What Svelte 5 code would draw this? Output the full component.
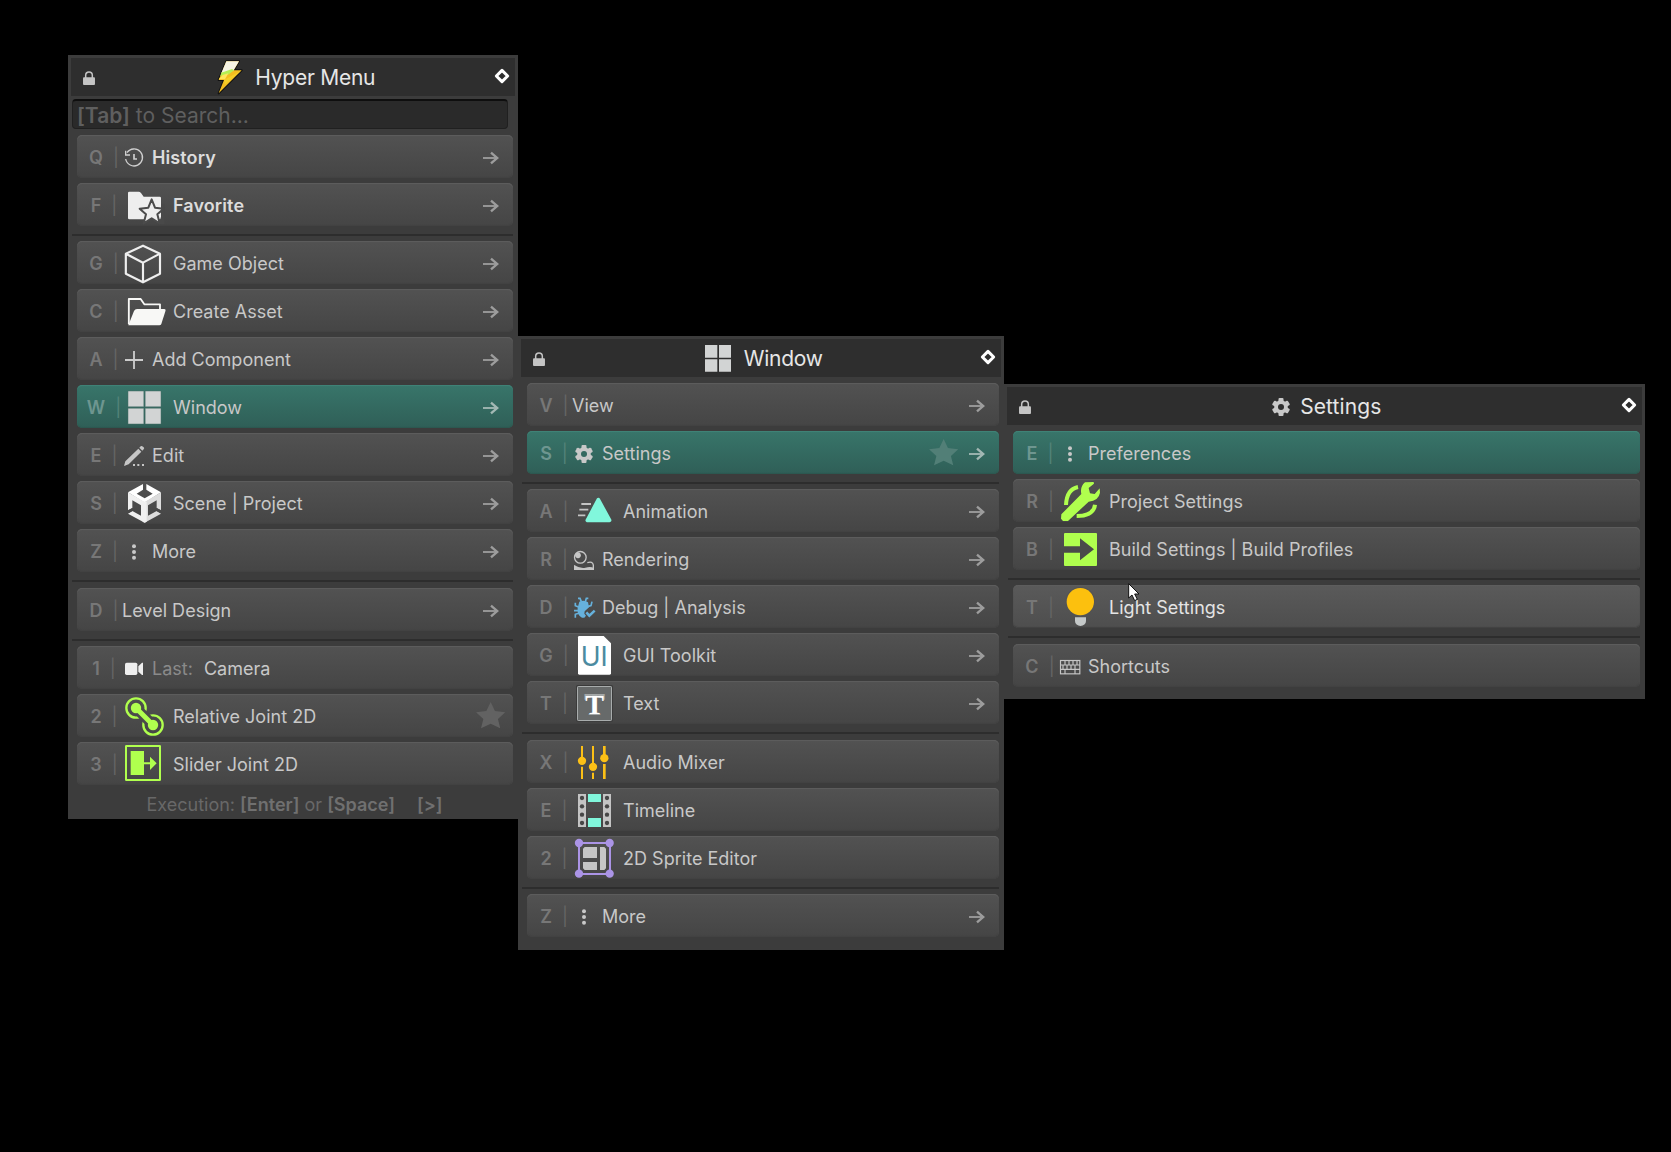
<script>
  const panels = [
    {
      id: 'hyper', title: 'Hyper Menu', icon: 'bolt', iconWidth: 26, search: true, footer: true,
      groups: [
        [
          { key: 'Q', icon: 'history', label: 'History', bold: true, arrow: true },
          { key: 'F', icon: 'favorite', big: true, label: 'Favorite', bold: true, arrow: true }
        ],
        [
          { key: 'G', icon: 'cube', big: true, label: 'Game Object', arrow: true },
          { key: 'C', icon: 'folder', big: true, label: 'Create Asset', arrow: true },
          { key: 'A', icon: 'plus', label: 'Add Component', arrow: true },
          { key: 'W', icon: 'windows', big: true, label: 'Window', arrow: true, active: true },
          { key: 'E', icon: 'pencil', label: 'Edit', arrow: true },
          { key: 'S', icon: 'unity', big: true, label: 'Scene | Project', arrow: true },
          { key: 'Z', icon: 'dots', label: 'More', arrow: true }
        ],
        [{ key: 'D', label: 'Level Design', arrow: true }],
        [
          { key: '1', icon: 'camera', prefix: 'Last:', label: 'Camera' },
          { key: '2', icon: 'joint', big: true, label: 'Relative Joint 2D', star: true },
          { key: '3', icon: 'slider', big: true, label: 'Slider Joint 2D' }
        ]
      ],
      gaps: ['', 'wide', '']
    },
    {
      id: 'window', title: 'Window', icon: 'titleWindows', iconWidth: 26,
      groups: [
        [
          { key: 'V', label: 'View', arrow: true },
          { key: 'S', icon: 'gear', label: 'Settings', arrow: true, active: true, star: true }
        ],
        [
          { key: 'A', icon: 'animation', big: true, label: 'Animation', arrow: true },
          { key: 'R', icon: 'rendering', label: 'Rendering', arrow: true },
          { key: 'D', icon: 'bug', label: 'Debug | Analysis', arrow: true },
          { key: 'G', icon: 'ui', big: true, label: 'GUI Toolkit', arrow: true },
          { key: 'T', icon: 'text', big: true, label: 'Text', arrow: true }
        ],
        [
          { key: 'X', icon: 'mixer', big: true, label: 'Audio Mixer' },
          { key: 'E', icon: 'timeline', big: true, label: 'Timeline' },
          { key: '2', icon: 'sprite', big: true, label: '2D Sprite Editor' }
        ],
        [{ key: 'Z', icon: 'dots', label: 'More', arrow: true }]
      ],
      gaps: ['', 'wide', '']
    },
    {
      id: 'settings', title: 'Settings', icon: 'titleGear', iconWidth: 18,
      groups: [
        [
          { key: 'E', icon: 'dots', label: 'Preferences', active: true },
          { key: 'R', icon: 'wrench', big: true, label: 'Project Settings' },
          { key: 'B', icon: 'build', big: true, label: 'Build Settings | Build Profiles' }
        ],
        [{ key: 'T', icon: 'bulb', big: true, label: 'Light Settings', hover: true }],
        [{ key: 'C', icon: 'keyboard', label: 'Shortcuts' }]
      ],
      gaps: ['', 'wide']
    }
  ];
</script>

{#snippet gearShape(cx, cy)}
  <g transform="translate({cx} {cy})">
    {#each [0, 60, 120] as a}
      <rect x="-7.5" y="-27" width="15" height="54" rx="3" transform="rotate({a})" fill="#c8c8c8" />
    {/each}
    <circle r="14.5" fill="none" stroke="#c8c8c8" stroke-width="12" />
    <circle r="9" class="hole" />
  </g>
{/snippet}

{#snippet glyph(name)}
  {#if name === 'history'}
    <g fill="none" stroke="#d0d0d0" stroke-width="4">
      <path d="M5 72A25.500 25.500 0 1 0 9 53" /><path d="M5 47V60H18" /><path d="M30 57V72H39" stroke-width="5" />
    </g>
  {:else if name === 'favorite'}
    <path d="M12 30Q12 26 16 26H44Q48 26 51 30L59 41H107Q111 41 111 45V109H16Q12 109 12 105Z" fill="#eee" />
    <path d="M83 49L93 74L119 77L100 94L107 121L83 106L59 121L66 94L47 77L73 74Z" fill="#eee" stroke="#4b4b4b" stroke-width="6" stroke-linejoin="round" />
    <path d="M111.500 62H122V124H104L111.500 100Z" fill="#494949" />
  {:else if name === 'cube'}
    <path d="M57 14L108 38V98L57 124L5.500 98V38ZM5.500 38L57 65L108 38M57 65V124" fill="none" stroke="#eee" stroke-width="6.500" stroke-linejoin="round" />
  {:else if name === 'folder'}
    <path d="M14.500 106V30H50L61 46H108V62" fill="none" stroke="#f8f8f6" stroke-width="5.500" stroke-linejoin="round" />
    <path d="M39 60H121Q126 60 124.500 65L112 105Q110.500 109 106 109H13L30 66Q33 60 39 60Z" fill="#f8f8f6" />
  {:else if name === 'plus'}
    <path d="M3 69H57M30 42V96" stroke="#ccc" stroke-width="5.500" />
  {:else if name === 'windows'}
    <path d="M12 18H59.500V65.500H12ZM63.500 18H111V65.500H63.500ZM12 69.500H59.500V117H12ZM63.500 69.500H111V117H63.500Z" fill="#d2d4d4" stroke="#476c66" stroke-width="1.500" />
  {:else if name === 'pencil'}
    <path d="M0 99L4 85L43 47L52 56L14 94ZM46 44L50 40Q53 37 57 41L59 43Q62 46 59 49L55 53Z" fill="#c6c6c6" />
    <path d="M27 93H33V99H27ZM40 93H46V99H40ZM54 93H60V99H54Z" fill="#c6c6c6" />
  {:else if name === 'unity'}
    <path d="M57 9V26L38 38L62 52L86 38L67 26V9L111 34L62 65L12 34Z" fill="#fff" />
    <path d="M12 34L62 63V125L12 98L25 90L51 104V73L25 58V81L12 88Z" fill="#f0f0f0" />
    <path d="M111 34L62 63V125L111 98L98 90L72 104V73L98 58V81L111 88Z" fill="#dcdcdc" />
    <path d="M56 62H68V122L62 125L56 122Z" fill="#f0f0f0" />
    <path d="M12 88L25 81L33 86L14 96Z" fill="#494949" /><path d="M111 88L98 81L90 86L109 96Z" fill="#494949" />
  {:else if name === 'dots'}
    <g fill="#c8c8c8"><circle cx="30" cy="51.500" r="6" /><circle cx="30" cy="69" r="6" /><circle cx="30" cy="86.500" r="6" /></g>
  {:else if name === 'camera'}
    <rect x="3" y="50" width="37" height="37" rx="5" fill="#eee" /><path d="M43 61L54 50H57V87H54L43 77Z" fill="#eee" />
  {:else if name === 'joint'}
    <g fill="none" stroke="#b0ff4e" stroke-width="7"><circle cx="36" cy="42" r="29" /><circle cx="87" cy="93" r="29" /></g>
    <path d="M36 42L87 93" stroke="#4a4a4a" stroke-width="31" />
    <circle cx="36" cy="42" r="20" fill="#4c4c4c" /><circle cx="87" cy="93" r="20" fill="#494949" />
    <path d="M36 42L87 93" stroke="#b0ff4e" stroke-width="15" />
    <circle cx="36" cy="42" r="15.500" fill="#b0ff4e" /><circle cx="87" cy="93" r="15.500" fill="#b0ff4e" />
  {:else if name === 'slider'}
    <rect x="6" y="12" width="102" height="102" rx="1" fill="none" stroke="#b0ff4e" stroke-width="6" />
    <path d="M20 27H60V61H78V44L98 64L78 84V67H60V99H20Z" fill="#b0ff4e" />
  {:else if name === 'gear'}
    {@render gearShape(30, 69)}
  {:else if name === 'animation'}
    <path d="M22 45H51M16 62H43M12 79H34" stroke="#c4c4c4" stroke-width="5.500" />
    <path d="M73 32L40 94H107Z" fill="#81f7dc" stroke="#81f7dc" stroke-width="11" stroke-linejoin="round" />
  {:else if name === 'rendering'}
    <circle cx="19" cy="61" r="17.500" fill="none" stroke="#c6c6c6" stroke-width="4" /><circle cx="12" cy="55" r="8.500" fill="#c6c6c6" />
    <path d="M40 77Q56 72 58 84V96H2V86" fill="none" stroke="#c6c6c6" stroke-width="4" /><path d="M0 84Q18 95 34 92Q50 88 60 93V99H0Z" fill="#c6c6c6" />
  {:else if name === 'bug'}
    <g stroke="#66b1dc" stroke-width="5" fill="none">
      <path d="M12 40H18L22 50M43 40H37L34 50M14 66L4 62V53M40 65L51 62L54 50M13 77H0M16 84L4 88V98" />
    </g>
    <path d="M16 50Q30 43 42 52L45 67L32 79L31 86L36 92L31 98H24Q8 90 11 68Z" fill="#66b1dc" />
    <path d="M37 82L46 92L62 77" fill="none" stroke="#66b1dc" stroke-width="7.500" />
  {:else if name === 'ui'}
    <path d="M16 9H89L111 31V121Q111 125 107 125H16Q12 125 12 121V13Q12 9 16 9Z" fill="#fff" />
    <text x="20" y="100" class="ui-mark">UI</text>
  {:else if name === 'text'}
    <rect x="6" y="12" width="111" height="110" rx="5" fill="#3a3a3a" />
    <rect x="10.500" y="16.500" width="102" height="102" rx="2" fill="#676a6a" stroke="#a8acac" stroke-width="3" />
    <text x="62" y="102" text-anchor="middle" class="t-shadow">T</text>
    <text x="62" y="99" text-anchor="middle" class="t-mark">T</text>
  {:else if name === 'mixer'}
    <g fill="#fcc016">
      <path d="M21 18H27V60H21ZM21 80H27V117H21ZM54 18H60V76H54ZM54 98H60V117H54ZM87 18H95V50H87ZM87 72H95V117H87Z" />
      <circle cx="24" cy="62.500" r="12.500" /><circle cx="57" cy="80.500" r="12.500" /><circle cx="91" cy="54.500" r="12.500" />
    </g>
  {:else if name === 'timeline'}
    <path d="M12 18H36V117H12ZM87 18H111V117H87Z" fill="#c4c4c4" /><path d="M42 18H81V42H42ZM42 90H81V117H42Z" fill="#81f7dc" />
    {#each [30, 55, 80, 105] as y}
      <circle cx="24" cy={y} r="6.500" fill="#464646" /><circle cx="99" cy={y} r="6.500" fill="#464646" />
    {/each}
  {:else if name === 'sprite'}
    <rect x="15" y="21" width="93" height="93" fill="none" stroke="#ab94e6" stroke-width="6" />
    <g fill="#ab94e6"><circle cx="15" cy="21" r="12.500" /><circle cx="107" cy="21" r="12.500" /><circle cx="15" cy="113" r="12.500" /><circle cx="107" cy="113" r="12.500" /></g>
    <path d="M32 33H69V66H27V38ZM27 78H69V102H32L27 97ZM78 33H91L96 38V97L91 102H78Z" fill="#c6c6c6" />
  {:else if name === 'wrench'}
    <g fill="none" stroke="#b0ff4e" stroke-width="12">
      <path d="M54 24Q20 31 18 78" /><path d="M105 77Q101 111 50 111" />
    </g>
    <path d="M4 106L64 45Q59 24 75 10L101 9L102 14L86 27L90 43L104 45L119 28L120 41Q116 65 86 68L24 126H9L3 119Z" fill="#b0ff4e" stroke="#4a4a4a" stroke-width="3" paint-order="stroke" />
  {:else if name === 'build'}
    <rect x="12" y="18" width="99" height="99" rx="3" fill="#b0ff4e" /><path d="M12 58H60V34L102 67L60 100V77H12Z" fill="#4a4a4a" />
  {:else if name === 'bulb'}
    <path d="M45 97H78V108A16.500 15 0 0 1 45 108Z" fill="#c4c8c8" /><circle cx="61" cy="50" r="44" fill="#545454" /><circle cx="61" cy="50" r="41" fill="#fcc00e" />
  {:else if name === 'keyboard'}
    <rect x="1.500" y="49.500" width="58" height="40" fill="none" stroke="#c6c6c6" stroke-width="3.500" />
    <path d="M0 63H60M0 76H60M15 49V63M27 49V63M39 49V63M51 49V63M9 63V76M21 63V76M33 63V76M45 63V76M15 76V90M45 76V90" stroke="#c6c6c6" stroke-width="3.500" />
  {:else if name === 'bolt'}
    <path d="M28 10H66L50 37H74L5 106L21 66H5Z" fill="#f3bd20" stroke="#111" stroke-width="6" stroke-linejoin="round" paint-order="stroke" />
    <path d="M28 10H66L50 37L40 43L13 45Z" fill="#f6f4e4" /><path d="M13 44L45 33L51 37L33 50L10 54Z" fill="#b4ee54" />
    <path d="M21 66L72 38L50 58L24 80Z" fill="#f5cf28" /><path d="M5 64L17 51L34 46L24 64Z" fill="#ffe65a" />
  {:else if name === 'titleWindows'}
    <path d="M0 18H37V56H0ZM42 18H78V56H42ZM0 61H37V98H0ZM42 61H78V98H42Z" fill="#d2d4d4" />
  {:else if name === 'titleGear'}
    {@render gearShape(27, 60)}
  {/if}
{/snippet}

<main>
  {#each panels as panel}
    <section class="panel {panel.id}">
      <header>
        <svg class="lock" viewBox="0 0 36 43" aria-hidden="true">
          <path d="M8 22V13A10 10 0 0 1 28 13V22" fill="none" stroke="#c4c4c4" stroke-width="4.500" />
          <rect y="19" width="36" height="23" rx="3" fill="#c4c4c4" />
        </svg>
        <h1>
          <svg style:width="{panel.iconWidth}px" viewBox="0 0 {panel.iconWidth * 3} 114" aria-hidden="true">{@render glyph(panel.icon)}</svg>
          <span>{panel.title}</span>
        </h1>
        <svg class="diamond" viewBox="0 0 48 48" aria-hidden="true">
          <path d="M24 7L41 24L24 41L7 24Z" fill="none" stroke="#fff" stroke-width="9" stroke-linejoin="round" />
        </svg>
      </header>

      {#if panel.search}
        <div class="search"><b>[Tab]</b> to Search...</div>
      {/if}

      <div class="groups">
        {#each panel.groups as group, i}
          <ul>
            {#each group as item}
              <li class:active={item.active} class:hover={item.hover}>
                <span class="key"><b>{item.key}</b><i>|</i></span>
                {#if item.icon}
                  <svg class="icon" class:big={item.big} viewBox="0 0 {item.big ? 120 : 60} 129" aria-hidden="true">{@render glyph(item.icon)}</svg>
                {/if}
                {#if item.prefix}<span class="prefix">{item.prefix}</span>{/if}
                <span class="label" class:bold={item.bold}>{item.label}</span>
                {#if item.star}
                  <svg class="star" viewBox="0 0 88 80" aria-hidden="true"><path d="M44 0L57 27L88 31L66 51L73 79L44 66L15 79L22 51L0 31L31 27Z" /></svg>
                {/if}
                {#if item.arrow}
                  <svg class="arrow" viewBox="0 0 48 42" aria-hidden="true"><path class="shaft" d="M0 21H43" /><path class="head" d="M24 5L43 21L24 37" /></svg>
                {/if}
              </li>
            {/each}
          </ul>
          {#if i < panel.gaps.length}<hr class={panel.gaps[i]} />{/if}
        {/each}
      </div>

      {#if panel.footer}
        <footer>Execution: <b>[Enter]</b> or <b>[Space]</b><b class="more">[&gt;]</b></footer>
      {/if}
    </section>
  {/each}

  <svg class="cursor" viewBox="0 0 36 57" aria-hidden="true">
    <path d="M2 2V45L12 36L20 53L28 49L20 33H33Z" fill="#fff" stroke="#111" stroke-width="3" stroke-linejoin="round" />
  </svg>
</main>

<style>
  :global(body) { background: #000; }
  main {
    box-sizing: border-box;
    position: relative;
    display: flex;
    align-items: flex-start;
    width: 1671px;
    height: 1152px;
    padding-left: 68px;
    overflow: hidden;
    background: #000;
    font-family: Inter, "Liberation Sans", sans-serif;
    font-size: 18px;
    color: #c8c8c8;
  }
  .panel { box-sizing: border-box; flex: none; padding: 3px; background: #3c3c3c; }
  .hyper { width: 450px; height: 764px; margin-top: 55px; }
  .window { width: 486px; height: 614px; margin-top: 336px; }
  .settings { width: 641px; height: 315px; margin-top: 384px; }

  header { display: flex; align-items: center; height: 38px; padding: 0 5px 0 12px; background: #2e2e2e; }
  .lock { width: 12px; height: 14.3px; margin-top: 3px; }
  h1 {
    flex: 1;
    display: flex;
    align-items: center;
    justify-content: center;
    gap: 12.500px;
    margin: 0;
    padding-left: 3px;
    font-size: 21px;
    font-weight: 400;
    letter-spacing: -0.25px;
    color: #e6e6e6;
  }
  h1 svg { height: 38px; }
  .settings h1 { gap: 10.500px; padding-left: 1px; letter-spacing: 0.1px; }
  .diamond { width: 16px; height: 16px; margin-bottom: 2px; }

  .search {
    box-sizing: border-box;
    width: 436px;
    height: 30px;
    margin: 3px 0 0 1px;
    padding-left: 4px;
    border: 1px solid #202020;
    border-top: 2px solid #0e0e0e;
    border-radius: 4px;
    background: #2a2a2a;
    font-size: 21px;
    line-height: 30px;
    color: #5f5f5f;
  }
  .search b { font-weight: 600; }

  .groups { padding: 6px 2px 0 6px; }
  ul { display: flex; flex-direction: column; gap: 5px; margin: 0; padding: 0; list-style: none; }
  li {
    box-sizing: border-box;
    display: flex;
    align-items: center;
    height: 43px;
    padding-right: 14px;
    border-radius: 5px;
    background: linear-gradient(#525252, #454545);
    box-shadow: inset 0 1px 1px #5e5e5e, inset 0 -1px 1px #424242;
  }
  li.hover { background: linear-gradient(#5a5a5a, #4e4e4e); }
  li.active { background: linear-gradient(#38756a, #2f5f57); box-shadow: inset 0 1px 1px #418478, inset 0 -1px 1px #2d5850; }
  hr { height: 2px; margin: 8px 0 5px -5px; border: 0; background: #2d2d2d; }
  hr.wide { margin-bottom: 6px; }

  .key, .label, .prefix { padding-top: 2px; }
  .key { flex: none; width: 38px; margin-right: 7px; text-align: center; color: #777; white-space: nowrap; }
  .key b { font-weight: 600; }
  .key i { display: inline-block; width: 0; font-style: normal; text-indent: 10px; color: #656565; }
  .active .key { color: #6e9690; }
  .active .key i { color: #538379; }
  .icon { flex: none; width: 20px; height: 43px; margin: 0 8px 0 2px; overflow: visible; }
  .icon.big { width: 40px; margin-right: 9px; }
  .label { flex: 1; white-space: nowrap; letter-spacing: 0.02px; }
  .label.bold { font-weight: 600; letter-spacing: 0.1px; color: #dcdcdc; }
  .hover .label { color: #e4e4e4; }
  .prefix { margin-right: 11px; color: #8a8a8a; }
  .star { width: 29.300px; height: 26.500px; margin-right: -6.500px; fill: #626262; }
  .active .star { margin-right: 10.500px; fill: #527f77; }
  .arrow { width: 16px; height: 14px; margin-top: 2px; fill: none; stroke: #9d9d9d; }
  .shaft { stroke-width: 5.500; }
  .head { stroke-width: 7; }
  .active .arrow { stroke: #a3b8b4; }
  .icon .hole { fill: #34695f; }
  h1 .hole { fill: #2e2e2e; }

  .ui-mark { font: 400 80px Inter, sans-serif; fill: #4b8ba1; }
  .t-mark { font: 700 84px "Liberation Serif", serif; fill: #fff; }
  .t-shadow { font: 700 95px "Liberation Serif", serif; fill: #a4a8a8; }

  footer { padding: 9px 0 0 3px; text-align: center; white-space: nowrap; line-height: 22px; color: #686868; }
  footer b { font-weight: 600; color: #707070; }
  footer .more { margin-left: 22px; }

  .cursor { position: absolute; left: 1128px; top: 583px; width: 12px; height: 19px; }
</style>
